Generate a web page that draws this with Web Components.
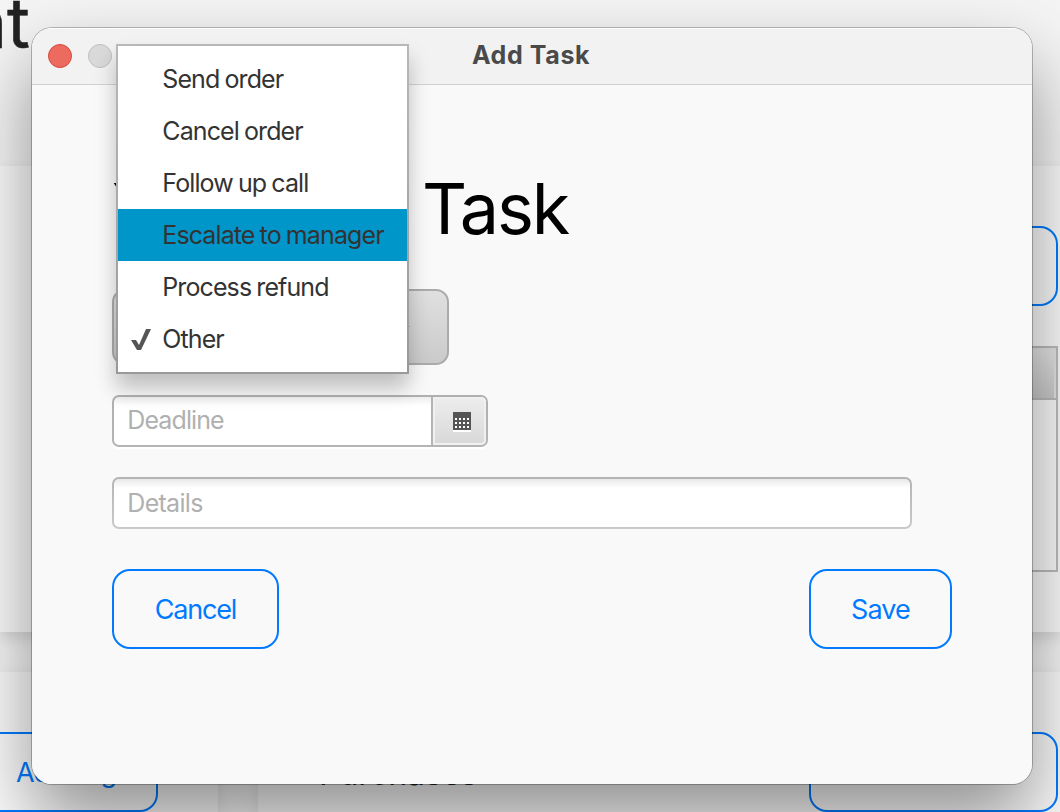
<!DOCTYPE html>
<html lang="en">
<head>
<meta charset="utf-8">
<title>Add Task</title>
<style>
html,body{margin:0;height:100%;overflow:hidden}
body{font-family:Inter,"Liberation Sans",sans-serif;color:#333;background:#f4f4f4}
</style>
</head>
<body>
<task-desktop></task-desktop>
<script>
function define(name, html) {
  const template = document.createElement('template');
  template.innerHTML = '<style>*{box-sizing:border-box}</style>' + html;
  customElements.define(name, class extends HTMLElement {
    constructor() {
      super();
      this.attachShadow({mode: 'open'}).append(template.content.cloneNode(true));
    }
  });
}

define('outline-button', `
<style>
:host{display:flex;box-sizing:border-box;height:80px;align-items:center;justify-content:center;
border:2px solid #007aff;border-radius:18px;color:#007aff;font-size:27px;letter-spacing:-1.2px;white-space:nowrap}
</style><slot></slot>`);

define('backdrop-page', `
<style>
:host{display:grid;grid-template-rows:166px 466px 40px 140px;width:1060px;height:812px;overflow:hidden;background:#f4f4f4}
header{font-size:70px;line-height:70px;color:#222;width:30px;display:flex;justify-content:flex-end;margin-top:-12px;letter-spacing:0;-webkit-text-stroke:.5px #222}
.panel{background:#fafafa;box-shadow:0 6px 14px rgba(0,0,0,.12);display:flex;flex-direction:column;align-items:flex-end;padding:60px 2px 0 0}
.panel outline-button{width:249px}
.table{width:600px;height:226px;margin-top:40px;border:2px solid #bbb}
.table div{height:52px;border-bottom:2px solid #bbb;background:linear-gradient(#e6e6e6,#cacaca);box-shadow:inset -2px 2px #e2e2e2}
.cards{grid-row:4;display:grid;grid-template-columns:218px 1fr;gap:40px}
.card{background:#fafafa;box-shadow:0 4px 14px rgba(0,0,0,.08);display:flex;padding-top:60px}
.card.left outline-button{width:184px;margin-left:-26px;letter-spacing:-.9px}
.card.right{justify-content:space-between;padding-right:2px;padding-left:61px}
.card.right outline-button{width:249px}
.title{font-size:32px;line-height:36px;margin-top:23.5px;color:#222}
</style>
<header>nt</header>
<section class="panel"><outline-button></outline-button><div class="table"><div></div></div></section>
<section class="cards">
<div class="card left"><outline-button>Add Tag</outline-button></div>
<div class="card right"><div class="title">Purchases</div><outline-button></outline-button></div>
</section>`);

define('window-bar', `
<style>
:host{display:grid;grid-template-columns:1fr auto 1fr;align-items:center;height:57px;padding:0 16px;box-sizing:border-box;
background:#f2f2f2;border-bottom:1px solid #d2d2d2;box-shadow:inset 0 1px #fff}
.lights{display:flex;gap:16px}
i{width:24px;height:24px;border-radius:50%;background:#ec6a5e;border:1px solid #d6493e}
i+i{background:#d9d9d9;border-color:#bdbdbd}
b{font-size:25px;font-weight:700;color:#4a4a4a;line-height:30px;letter-spacing:.6px;margin:-2px 2px 0 0}
</style>
<div class="lights"><i></i><i></i></div><b><slot></slot></b>`);

define('choice-box', `
<style>
:host{display:flex;box-sizing:border-box;width:337px;height:76px;border:2px solid #ababab;border-radius:13px;
background:linear-gradient(#e0e0e0,#cacaca);align-items:center;justify-content:flex-end;padding-right:37px}
svg{margin-top:-2px}
</style>
<svg width="16" height="9" viewBox="0 0 16 9"><path d="M0 4h16L8 9z" fill="#555"/></svg>`);

define('text-entry', `
<style>
:host{display:flex;box-sizing:border-box;height:52px;border:2px solid transparent;border-radius:7px;
background:linear-gradient(#e9e9e9,#fff 9px) padding-box,linear-gradient(#b4b4b4,#cacaca) border-box;
color:#b0b0b0;font-size:25px;letter-spacing:-.7px;align-items:center;padding-left:13.3px}
:host([date]){width:376px;letter-spacing:-.9px;background:linear-gradient(#efefef,#fff 9px) padding-box,linear-gradient(#b0b0b0,#b4b4b4) border-box;box-shadow:0 2px #fff}
span{flex:1;line-height:30px;margin-top:-1px}
:host([date]) span{margin-top:-3px}
</style>
<span><slot></slot></span><slot name="end"></slot>`);

define('calendar-button', `
<style>
:host{display:flex;align-items:center;justify-content:center;box-sizing:border-box;align-self:stretch;width:55px;
border-left:2px solid #b4b4b4;border-radius:0 5px 5px 0;background:linear-gradient(#ededed,#d8d8d8);box-shadow:inset 0 0 0 2px #f0f0f0;padding:2px 0 0 5px}
</style>
<svg width="18" height="20" viewBox="0 0 18 20" shape-rendering="crispEdges"><path fill="#fff" d="M0 18h18v2H0z"/><path fill="#555" d="M0 0h18v18H0z"/>
<path fill="#fff" d="M2 6h2v2H2zm4 0h2v2H6zm4 0h2v2h-2zm4 0h2v2h-2zM2 10h2v2H2zm4 0h2v2H6zm4 0h2v2h-2zm4 0h2v2h-2zM2 14h2v2H2zm4 0h2v2H6zm4 0h2v2h-2zm4 0h2v2h-2z"/></svg>`);

define('menu-row', `
<style>
:host{display:flex;align-items:center;height:52px;font-size:25px;letter-spacing:-.9px;word-spacing:-1px;color:#333;white-space:nowrap}
:host([active]){background:#0096c9}
.mark{width:44.3px;display:flex;padding-left:13px;box-sizing:border-box}
svg{display:none}
:host([checked]) svg{display:block}
</style>
<span class="mark"><svg width="20" height="21" viewBox="0 0 20 21"><path fill="#555" d="M0 11h5l3 5L15 0h5L10 21H6z"/></svg></span><slot></slot>`);

define('drop-menu', `
<style>
:host{display:block;box-sizing:border-box;width:293px;height:330px;padding:7px 0;border:2px solid transparent;
background:linear-gradient(#fff,#fff) padding-box,linear-gradient(#b8b8b8,#999) border-box;box-shadow:0 14px 20px rgba(0,0,0,.24)}
</style><slot></slot>`);

define('task-form', `
<style>
:host{display:flex;flex-direction:column;height:699px;padding:84px 80px 0;box-sizing:border-box;background:#f9f9f9}
h1{display:flex;margin:-3px 0 38px;height:85px;line-height:85px;font-size:70px;font-weight:400;color:#000;letter-spacing:-2.2px;white-space:nowrap}
h1 span:first-child{width:310px;letter-spacing:-5px}
text-entry{margin-top:30px}
.details{width:800px}
.actions{display:flex;justify-content:space-between;margin-top:40px}
.cancel{width:167px}.save{width:143px;letter-spacing:-.9px}
</style>
<h1><span>Your New</span><span>Task</span></h1>
<choice-box></choice-box>
<text-entry date>Deadline<calendar-button slot="end"></calendar-button></text-entry>
<text-entry class="details">Details</text-entry>
<div class="actions"><outline-button class="cancel">Cancel</outline-button><outline-button class="save">Save</outline-button></div>`);

define('task-desktop', `
<style>
:host{display:block;position:relative;width:1060px;height:812px;overflow:hidden}
.window{position:absolute;left:32px;top:28px;width:1000px;height:756px;border-radius:20px;
box-shadow:0 0 0 1px rgba(0,0,0,.25),0 36px 72px rgba(0,0,0,.42)}
.clip{border-radius:20px;overflow:hidden;height:756px}
drop-menu{position:absolute;left:116px;top:44px}
</style>
<backdrop-page></backdrop-page>
<div class="window"><div class="clip"><window-bar>Add Task</window-bar><task-form></task-form></div></div>
<drop-menu>
<menu-row>Send order</menu-row><menu-row>Cancel order</menu-row><menu-row>Follow up call</menu-row>
<menu-row active>Escalate to manager</menu-row><menu-row>Process refund</menu-row><menu-row checked>Other</menu-row>
</drop-menu>`);
</script>
</body>
</html>
